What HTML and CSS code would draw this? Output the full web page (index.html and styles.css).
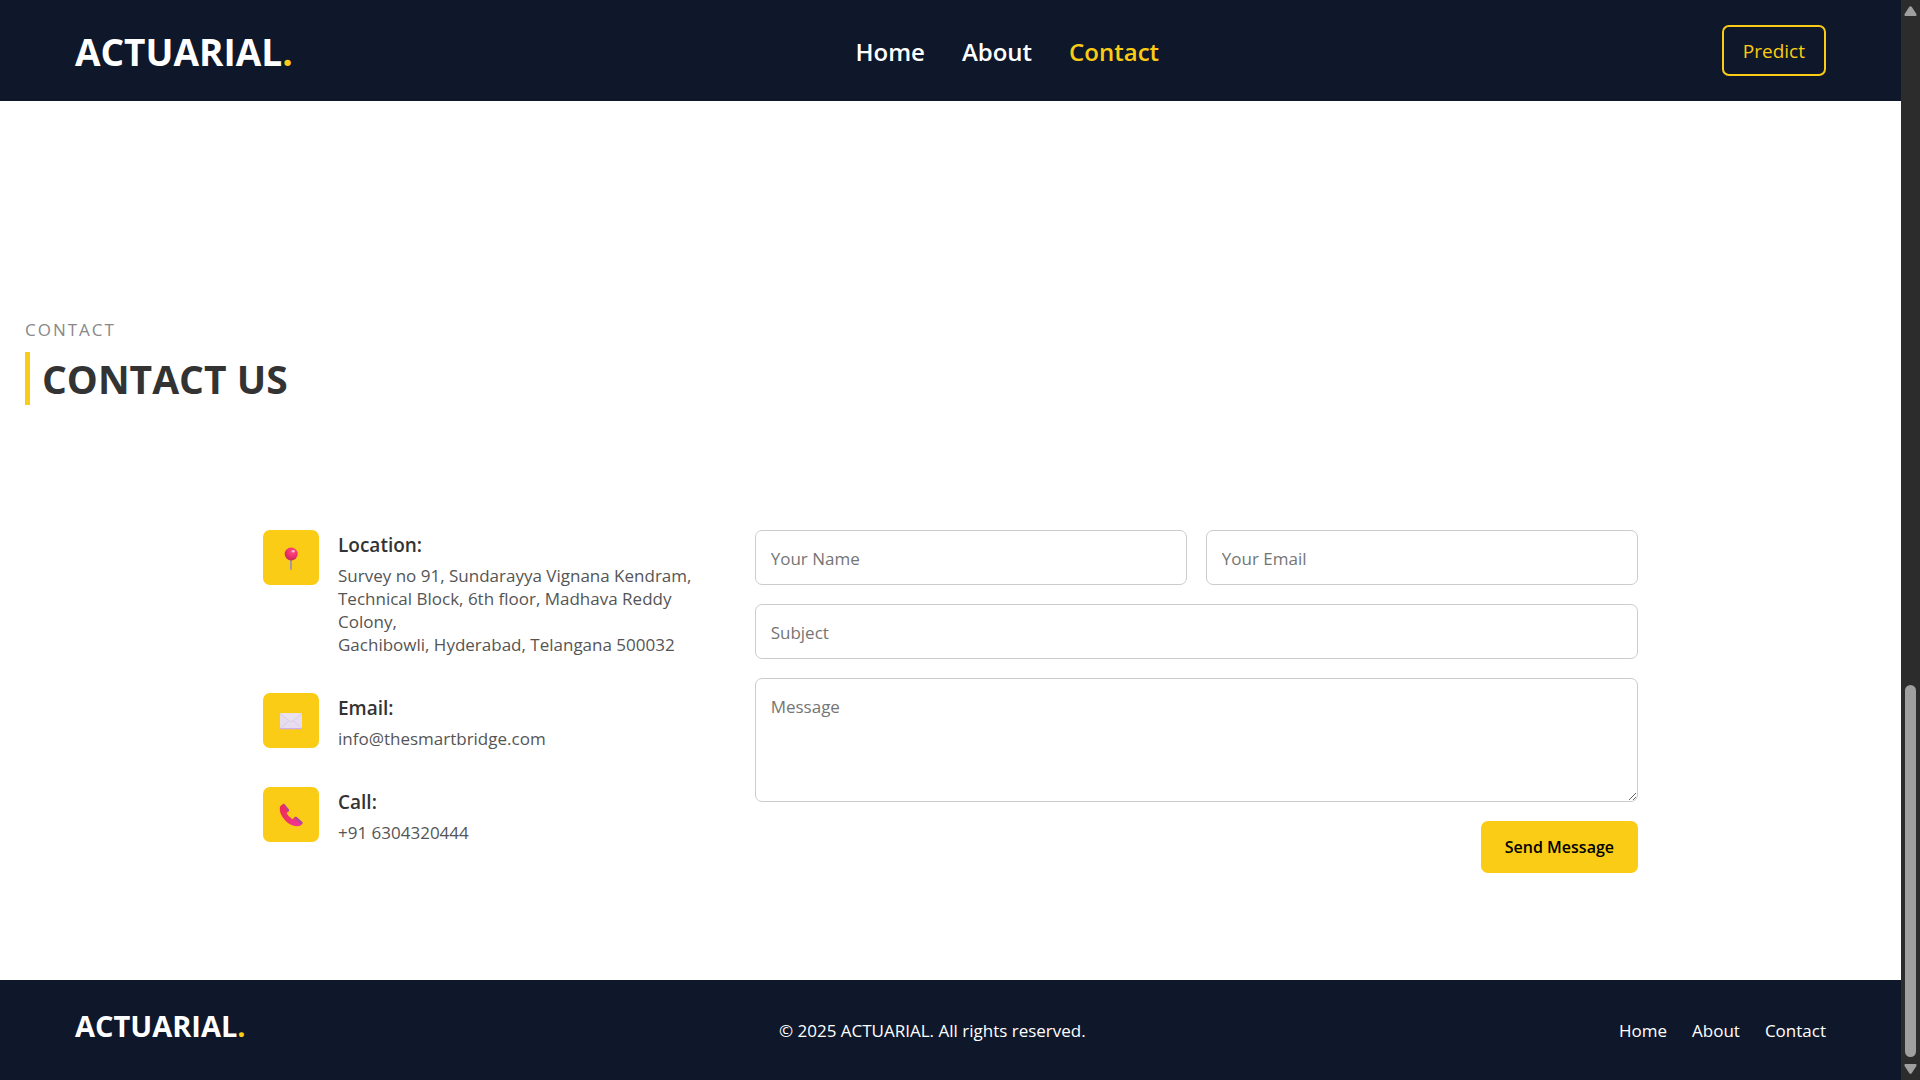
FILE: index.html
```html
<!DOCTYPE html>
<html lang="en">
<head>
<meta charset="utf-8">
<meta name="viewport" content="width=device-width, initial-scale=1">
<title>ACTUARIAL. - Contact</title>
<link rel="stylesheet" href="styles.css">
</head>
<body>
<div class="page">
  <header class="site-header">
    <div class="logo">ACTUARIAL<span class="accent">.</span></div>
    <nav class="main-nav" aria-label="Main">
      <a href="#home">Home</a>
      <a href="#about">About</a>
      <a href="#contact" class="active">Contact</a>
    </nav>
    <button type="button" class="predict">Predict</button>
  </header>

  <main class="contact" id="contact">
    <div class="section-head">
      <p class="eyebrow">CONTACT</p>
      <h2 class="section-title">CONTACT US</h2>
    </div>

    <div class="contact-grid">
      <div class="info">
        <div class="info-item">
          <span class="icon">
            <svg width="24" height="24" viewBox="0 0 24 24" aria-hidden="true">
              <defs>
                <radialGradient id="ball" cx="0.6" cy="0.3" r="0.7">
                  <stop offset="0" stop-color="#ff4f86"/>
                  <stop offset="0.5" stop-color="#f5336f"/>
                  <stop offset="1" stop-color="#c62a5e"/>
                </radialGradient>
              </defs>
              <rect x="11" y="13" width="2" height="11" rx="1" fill="#a39aa6"/>
              <circle cx="12.2" cy="8" r="6.5" fill="url(#ball)"/>
              <ellipse cx="14.3" cy="5.2" rx="1.6" ry="1.2" fill="#ffb3cc"/>
            </svg>
          </span>
          <div class="info-text">
            <h4>Location:</h4>
            <p>Survey no 91, Sundarayya Vignana Kendram,<br>Technical Block, 6th floor, Madhava Reddy Colony,<br>Gachibowli, Hyderabad, Telangana 500032</p>
          </div>
        </div>
        <div class="info-item">
          <span class="icon">
            <svg width="24" height="24" viewBox="0 0 24 24" aria-hidden="true">
              <defs>
                <linearGradient id="paper" x1="0" y1="0" x2="1" y2="1">
                  <stop offset="0" stop-color="#e4dde9"/>
                  <stop offset="1" stop-color="#e9dcf6"/>
                </linearGradient>
              </defs>
              <rect x="1" y="4" width="22" height="16" rx="1" fill="url(#paper)"/>
              <path d="M1 4.500 10.500 12Q12 13 13.500 12L23 4.500" fill="#e9e1ee" stroke="#d3c6de" stroke-width="0.700"/>
              <path d="M1.500 19 9.500 12M22.500 19 14.500 12" fill="none" stroke="#d3c6de" stroke-width="0.700"/>
              <path d="M1 19H23V19.500Q23 20.300 22 20.300H2Q1 20.300 1 19.500Z" fill="#cdaef0"/>
            </svg>
          </span>
          <div class="info-text">
            <h4>Email:</h4>
            <p>info@thesmartbridge.com</p>
          </div>
        </div>
        <div class="info-item">
          <span class="icon">
            <svg width="24" height="24" viewBox="0 0 24 24" aria-hidden="true">
              <defs>
                <linearGradient id="handset" x1="0" y1="0" x2="1" y2="1">
                  <stop offset="0" stop-color="#ef2b4f"/>
                  <stop offset="0.600" stop-color="#ee3474"/>
                  <stop offset="1" stop-color="#f030a8"/>
                </linearGradient>
              </defs>
              <path d="M1.500 3 4 1Q5 .5 5.700 1.500L9.800 6.500Q10.500 7.500 9.600 8.200L7.500 9.900Q9 13.500 13.500 16.200L15.800 14.100Q16.700 13.300 17.600 14L23.100 19Q24 19.900 23.200 20.700L21.500 22.400Q20.600 23.200 18 23.200Q11 23 6 17.300Q.3 11 .8 5Q.8 3.600 1.500 3Z" fill="url(#handset)"/>
              <path d="M3.600 1.300Q4.800.4 5.700 1.500L9.800 6.500Q10.500 7.500 9.600 8.200L8.300 9.200Q7.600 6.200 3.600 1.300Z" fill="#b0449f"/>
              <path d="M15.300 14.500Q16.700 13.300 17.600 14L23.100 19Q24 19.900 23.200 20.700L22.200 21.700Q17.500 18 15.300 14.500Z" fill="#b0449f"/>
            </svg>
          </span>
          <div class="info-text">
            <h4>Call:</h4>
            <p>+91 6304320444</p>
          </div>
        </div>
      </div>

      <form class="contact-form">
        <div class="form-row">
          <input type="text" placeholder="Your Name" aria-label="Your Name">
          <input type="email" placeholder="Your Email" aria-label="Your Email">
        </div>
        <input type="text" placeholder="Subject" aria-label="Subject">
        <textarea placeholder="Message" aria-label="Message"></textarea>
        <button type="submit" class="send">Send Message</button>
      </form>
    </div>
  </main>

  <footer class="site-footer">
    <div class="logo logo-small">ACTUARIAL<span class="accent">.</span></div>
    <p class="copyright">© 2025 ACTUARIAL. All rights reserved.</p>
    <nav class="footer-nav" aria-label="Footer">
      <a href="#home">Home</a>
      <a href="#about">About</a>
      <a href="#contact">Contact</a>
    </nav>
  </footer>
</div>

<div class="scrollbar" aria-hidden="true">
  <svg width="13" height="10" viewBox="0 0 13 10"><path d="M5.300.8Q6.500-.5 7.700.8L12.400 8Q13 10 11.500 10H1.500Q0 10 .6 8Z" fill="#9f9f9f"/></svg>
  <div class="track"><div class="thumb"></div></div>
  <svg width="13" height="10" viewBox="0 0 13 10"><path d="M5.300 9.200Q6.500 10.500 7.700 9.200L12.400 2Q13 0 11.500 0H1.500Q0 0 .6 2Z" fill="#9f9f9f"/></svg>
</div>
</body>
</html>
```
FILE: styles.css
```css
* {
  box-sizing: border-box;
  margin: 0;
  padding: 0;
}

:root {
  --navy: #0f172a;
  --yellow: #facc15;
}

body {
  display: flex;
  min-height: 100vh;
  font-family: "Open Sans", "Noto Sans", sans-serif;
  font-size: 17px;
  color: #333;
  background: #fff;
}

a {
  color: inherit;
  text-decoration: none;
}

.page {
  flex: 1;
  display: flex;
  flex-direction: column;
  min-width: 0;
}

/* Header */
.site-header {
  display: flex;
  align-items: center;
  justify-content: space-between;
  padding: 25px 75px;
  background: var(--navy);
  color: #fff;
}

.logo {
  padding-top: 3px;
  font-size: 37px;
  font-weight: 700;
  line-height: 48px;
}

.accent {
  color: var(--yellow);
}

.main-nav {
  display: flex;
  gap: 37px;
  padding-top: 2px;
  font-size: 24px;
  font-weight: 600;
}

.main-nav .active {
  color: var(--yellow);
}

.predict {
  height: 51px;
  padding: 0 19px;
  border: 2px solid var(--yellow);
  border-radius: 7px;
  background: transparent;
  color: var(--yellow);
  font: inherit;
  font-size: 19px;
}

/* Contact section */
.contact {
  flex: 1;
  padding: 217px 25px 107px;
}

.eyebrow {
  font-size: 17px;
  line-height: 24px;
  letter-spacing: 2px;
  color: #888;
}

.section-title {
  margin-top: 10px;
  padding-left: 12px;
  border-left: 5px solid var(--yellow);
  font-size: 39px;
  line-height: 53px;
}

.contact-grid {
  display: grid;
  grid-template-columns: 1fr 2fr;
  gap: 50px;
  max-width: 1375px;
  margin: 125px auto 0;
}

.info {
  display: flex;
  flex-direction: column;
  gap: 37px;
}

.info-item {
  display: flex;
  align-items: flex-start;
  gap: 19px;
}

.icon {
  display: flex;
  align-items: center;
  justify-content: center;
  flex: none;
  width: 56px;
  height: 55px;
  border-radius: 7px;
  background: var(--yellow);
}

.info-text h4 {
  margin-bottom: 4px;
  font-size: 19px;
  font-weight: 600;
  line-height: 30px;
}

.info-text p {
  line-height: 23px;
  color: #555;
}

/* Form */
.contact-form {
  display: flex;
  flex-direction: column;
  gap: 19px;
}

.form-row {
  display: grid;
  grid-template-columns: 1fr 1fr;
  gap: 19px;
}

input,
textarea {
  width: 100%;
  height: 55px;
  padding: 16px 15px 14px;
  border: 1px solid #ccc;
  border-radius: 7px;
  background: #fff;
  font: inherit;
  color: #333;
}

textarea {
  height: 124px;
  resize: vertical;
}

::placeholder {
  color: #757575;
}

.send {
  align-self: flex-end;
  height: 52px;
  padding: 0 24px;
  border: 0;
  border-radius: 7px;
  background: var(--yellow);
  color: #000;
  font: inherit;
  font-size: 16px;
  font-weight: 600;
}

/* Footer */
.site-footer {
  display: flex;
  align-items: center;
  justify-content: space-between;
  height: 100px;
  padding: 0 75px;
  background: var(--navy);
  color: #fff;
}

.logo-small {
  padding: 0 0 8px;
  font-size: 29px;
}

.footer-nav {
  display: flex;
  gap: 25px;
}

/* Scrollbar */
.scrollbar {
  position: sticky;
  top: 0;
  display: flex;
  flex-direction: column;
  align-items: center;
  flex: none;
  gap: 7px;
  width: 19px;
  height: 100vh;
  padding: 6px 0;
  background: #2c2c2c;
}

.track {
  flex: 1;
  display: flex;
  flex-direction: column;
  justify-content: flex-end;
  width: 11px;
}

.thumb {
  height: 36%;
  border-radius: 6px;
  background: #9f9f9f;
}
```
